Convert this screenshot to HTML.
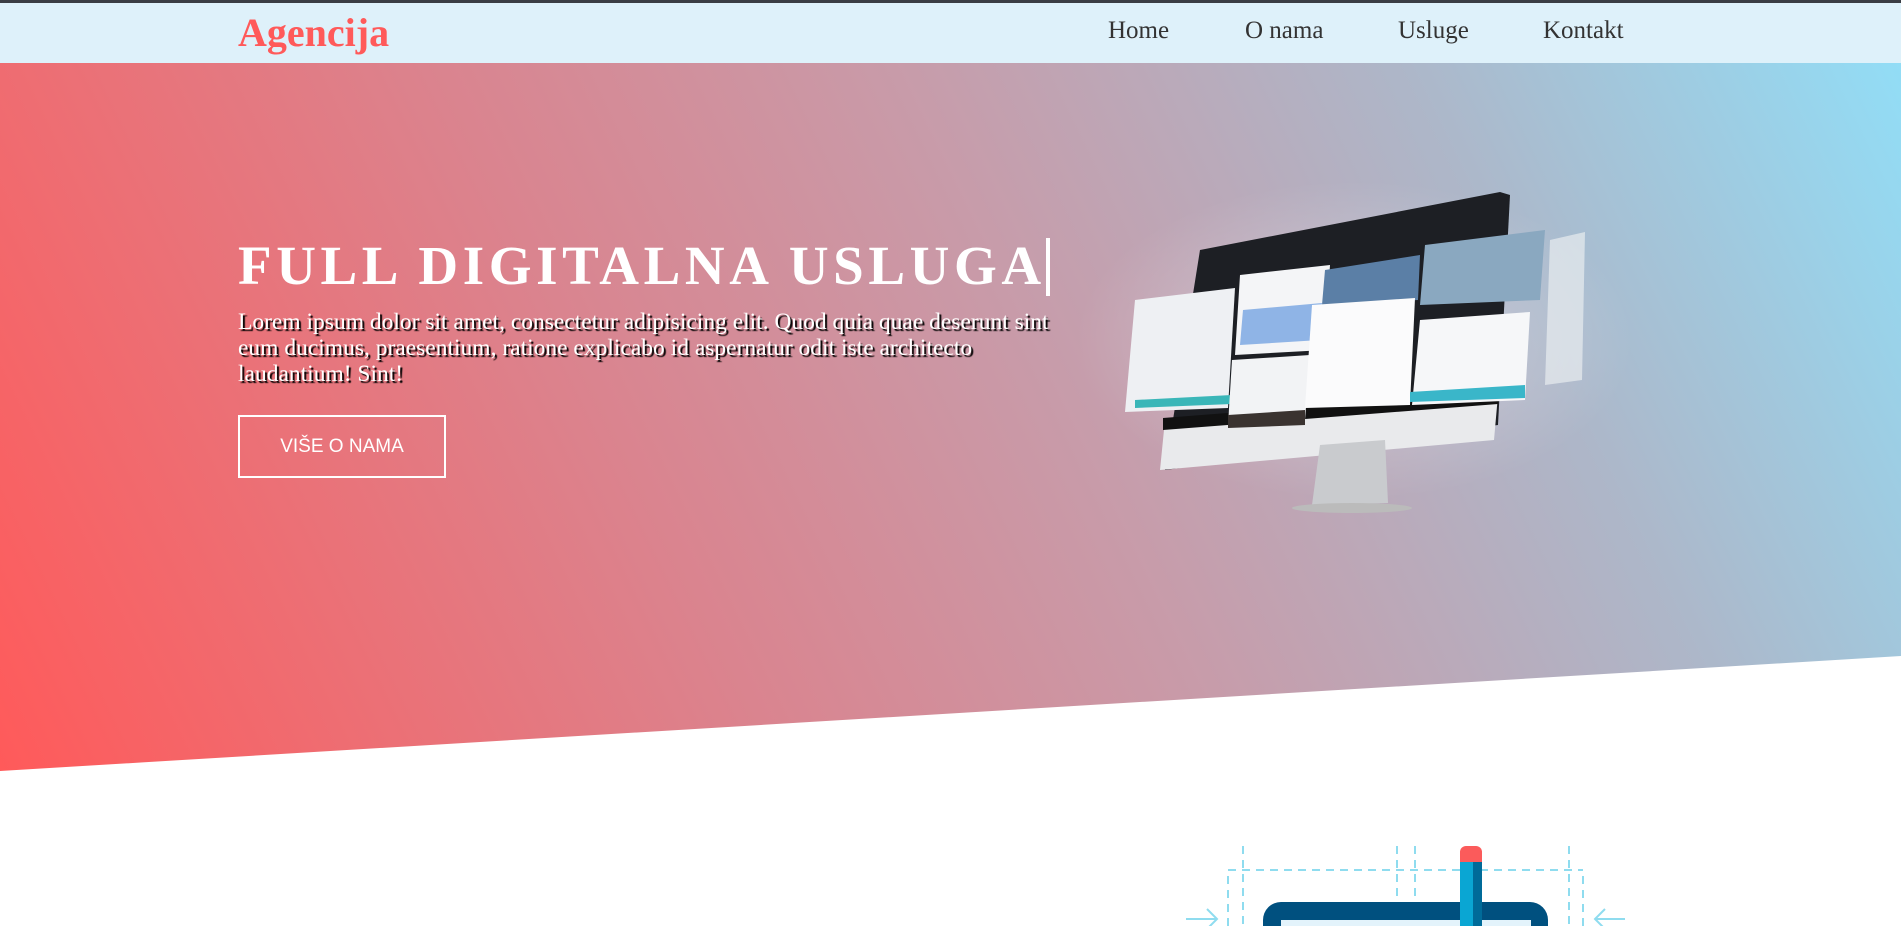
<!DOCTYPE html>
<html><head><meta charset="utf-8"><style>
*{margin:0;padding:0;box-sizing:border-box}
html,body{width:1901px;height:926px;overflow:hidden;background:#fff}
body{position:relative;font-family:"Liberation Serif",serif}
.top{position:absolute;left:0;top:0;width:1901px;height:3px;background:#3a3d44}
nav{position:absolute;left:0;top:3px;width:1901px;height:60px;background:#def1fa;z-index:2}
.logo{position:absolute;left:238px;top:6px;font-size:40px;font-weight:bold;color:#ff5a5a}
.nav a{position:absolute;top:14px;font-size:25px;color:#333;text-decoration:none}
.hero{position:absolute;left:0;top:63px;width:1901px;height:708px;
background:linear-gradient(64deg,#ff5a5a 0%,#da848f 35%,#c89ba9 55%,#adb7c9 78%,#92ddf6 100%);
clip-path:polygon(0 0,100% 0,100% 593px,0 708px)}
h1{position:absolute;left:238px;top:234px;font-size:55px;font-weight:bold;color:#fff;letter-spacing:4.6px;white-space:nowrap;font-family:"Liberation Serif",serif}
h1 span{display:inline-block;width:4px;height:58px;background:#fff;vertical-align:-12px;margin-left:0}
p{position:absolute;left:238px;top:309px;width:840px;font-size:23.5px;line-height:26px;color:#fff;text-shadow:2px 2px 1px #000}
.btn{position:absolute;left:238px;top:415px;width:208px;height:63px;border:2px solid #fff;color:#fff;font-family:"Liberation Sans",sans-serif;font-size:19px;text-align:center;line-height:59px}
</style></head><body>
<div class="top"></div>
<nav><div class="logo">Agencija</div>
<div class="nav"><a style="left:1108px">Home</a><a style="left:1245px">O nama</a><a style="left:1398px">Usluge</a><a style="left:1543px">Kontakt</a></div></nav>
<div class="hero"></div>
<h1>FULL DIGITALNA USLUGA<span></span></h1>
<p>Lorem ipsum dolor sit amet, consectetur adipisicing elit. Quod quia quae deserunt sint eum ducimus, praesentium, ratione explicabo id aspernatur odit iste architecto laudantium! Sint!</p>
<div class="btn">VIŠE O NAMA</div>

<svg style="position:absolute;left:0;top:0" width="1901" height="926">
<defs><radialGradient id="g" cx="0.5" cy="0.5" r="0.5"><stop offset="0" stop-color="#fff" stop-opacity=".35"/><stop offset="1" stop-color="#fff" stop-opacity="0"/></radialGradient></defs>
<ellipse cx="1355" cy="340" rx="280" ry="160" fill="url(#g)"/>
<polygon points="1200,250 1500,192 1510,195 1498,425 1165,470" fill="#1d1f24"/>
<polygon points="1165,420 1498,395 1494,440 1160,470" fill="#e9eaec"/>
<polygon points="1163,418 1498,392 1498,404 1163,430" fill="#111"/>
<polygon points="1320,445 1385,440 1388,503 1312,505" fill="#c9cbce"/>
<ellipse cx="1352" cy="508" rx="60" ry="5" fill="#bbb"/>
<polygon points="1135,300 1235,288 1228,408 1125,412" fill="#eef0f3"/>
<polygon points="1135,400 1232,395 1232,404 1135,408" fill="#3ab6b8"/>
<polygon points="1240,275 1330,265 1325,350 1235,355" fill="#f4f5f7"/>
<polygon points="1243,310 1322,303 1320,340 1240,345" fill="#8fb4e6"/>
<polygon points="1232,360 1310,355 1305,420 1228,425" fill="#f2f3f5"/>
<polygon points="1228,415 1305,410 1305,425 1228,428" fill="#3a3330"/>
<polygon points="1325,270 1420,255 1418,300 1322,305" fill="#5b7fa6"/>
<polygon points="1312,305 1415,298 1410,405 1305,408" fill="#fbfbfc"/>
<polygon points="1425,245 1545,230 1540,300 1420,305" fill="#8aa8c0"/>
<polygon points="1420,320 1530,312 1525,400 1412,405" fill="#f6f7f9"/>
<polygon points="1410,392 1525,385 1525,398 1410,402" fill="#3ab6c9"/>
<polygon points="1550,240 1585,232 1582,380 1545,385" fill="#e8ecf0" opacity=".7"/>
<g stroke="#8fdcef" stroke-width="2" stroke-dasharray="8,6" fill="none">
<line x1="1228" y1="870" x2="1583" y2="870"/>
<line x1="1243" y1="846" x2="1243" y2="926"/><line x1="1228" y1="876" x2="1228" y2="926"/>
<line x1="1397" y1="846" x2="1397" y2="900"/><line x1="1415" y1="846" x2="1415" y2="900"/>
<line x1="1569" y1="846" x2="1569" y2="926"/><line x1="1583" y1="876" x2="1583" y2="926"/>
</g>
<g stroke="#8fdcef" stroke-width="2" fill="none">
<path d="M1186 919 H1217 M1207 909 L1217 919 L1207 929"/>
<path d="M1595 919 H1625 M1605 909 L1595 919 L1605 929"/>
</g>
<rect x="1263" y="902" width="285" height="60" rx="18" fill="#00507f"/>
<rect x="1281" y="920" width="250" height="20" fill="#e3f3fb"/>
<rect x="1460" y="856" width="22" height="80" fill="#0aa6d3"/>
<rect x="1473" y="862" width="9" height="70" fill="#006b99"/>
<path d="M1460 862 V852 a6 6 0 0 1 6 -6 h10 a6 6 0 0 1 6 6 V862 Z" fill="#fb5b5b"/>
</svg>
</body></html>
